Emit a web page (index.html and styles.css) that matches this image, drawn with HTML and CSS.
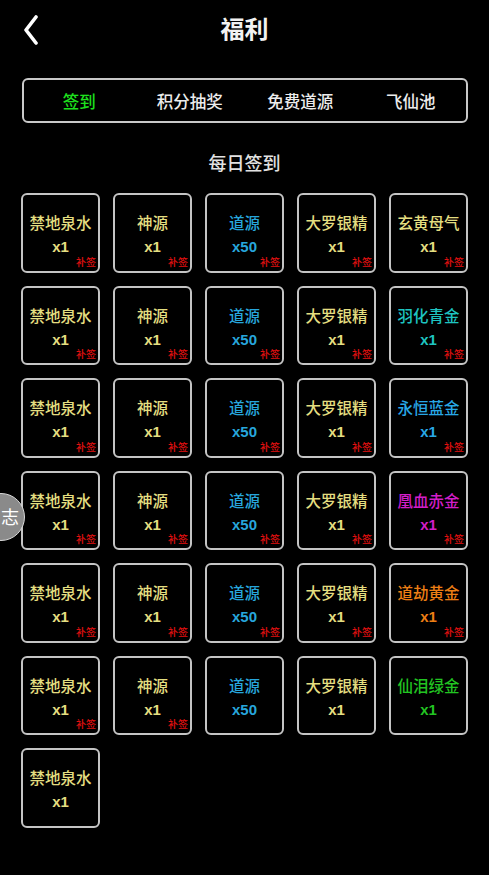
FILE: index.html
```html
<!DOCTYPE html>
<html lang="zh">
<head>
<meta charset="utf-8">
<title>福利</title>
<link rel="stylesheet" href="styles.css">
</head>
<body>
<div class="page">
  <header class="header">
    <div class="back">
      <svg width="22" height="32" viewBox="0 0 22 32"><polyline points="15,4 5,17 15,30" fill="none" stroke="#fff" stroke-width="3.6" stroke-linecap="round" stroke-linejoin="round"/></svg>
    </div>
    <h1 class="title">福利</h1>
    <div></div>
  </header>

  <nav class="tabs">
    <div class="tab active">签到</div>
    <div class="tab">积分抽奖</div>
    <div class="tab">免费道源</div>
    <div class="tab">飞仙池</div>
  </nav>

  <h2 class="subtitle">每日签到</h2>

  <div class="grid">
    <div class="card"><div class="name yellow">禁地泉水</div><div class="qty yellow">x1</div><span class="makeup">补签</span></div>
    <div class="card"><div class="name yellow">神源</div><div class="qty yellow">x1</div><span class="makeup">补签</span></div>
    <div class="card"><div class="name blue">道源</div><div class="qty blue">x50</div><span class="makeup">补签</span></div>
    <div class="card"><div class="name yellow">大罗银精</div><div class="qty yellow">x1</div><span class="makeup">补签</span></div>
    <div class="card"><div class="name yellow">玄黄母气</div><div class="qty yellow">x1</div><span class="makeup">补签</span></div>

    <div class="card"><div class="name yellow">禁地泉水</div><div class="qty yellow">x1</div><span class="makeup">补签</span></div>
    <div class="card"><div class="name yellow">神源</div><div class="qty yellow">x1</div><span class="makeup">补签</span></div>
    <div class="card"><div class="name blue">道源</div><div class="qty blue">x50</div><span class="makeup">补签</span></div>
    <div class="card"><div class="name yellow">大罗银精</div><div class="qty yellow">x1</div><span class="makeup">补签</span></div>
    <div class="card"><div class="name teal">羽化青金</div><div class="qty teal">x1</div><span class="makeup">补签</span></div>

    <div class="card"><div class="name yellow">禁地泉水</div><div class="qty yellow">x1</div><span class="makeup">补签</span></div>
    <div class="card"><div class="name yellow">神源</div><div class="qty yellow">x1</div><span class="makeup">补签</span></div>
    <div class="card"><div class="name blue">道源</div><div class="qty blue">x50</div><span class="makeup">补签</span></div>
    <div class="card"><div class="name yellow">大罗银精</div><div class="qty yellow">x1</div><span class="makeup">补签</span></div>
    <div class="card"><div class="name sky">永恒蓝金</div><div class="qty sky">x1</div><span class="makeup">补签</span></div>

    <div class="card"><div class="name yellow">禁地泉水</div><div class="qty yellow">x1</div><span class="makeup">补签</span></div>
    <div class="card"><div class="name yellow">神源</div><div class="qty yellow">x1</div><span class="makeup">补签</span></div>
    <div class="card"><div class="name blue">道源</div><div class="qty blue">x50</div><span class="makeup">补签</span></div>
    <div class="card"><div class="name yellow">大罗银精</div><div class="qty yellow">x1</div><span class="makeup">补签</span></div>
    <div class="card"><div class="name magenta">凰血赤金</div><div class="qty magenta">x1</div><span class="makeup">补签</span></div>

    <div class="card"><div class="name yellow">禁地泉水</div><div class="qty yellow">x1</div><span class="makeup">补签</span></div>
    <div class="card"><div class="name yellow">神源</div><div class="qty yellow">x1</div><span class="makeup">补签</span></div>
    <div class="card"><div class="name blue">道源</div><div class="qty blue">x50</div><span class="makeup">补签</span></div>
    <div class="card"><div class="name yellow">大罗银精</div><div class="qty yellow">x1</div><span class="makeup">补签</span></div>
    <div class="card"><div class="name orange">道劫黄金</div><div class="qty orange">x1</div><span class="makeup">补签</span></div>

    <div class="card"><div class="name yellow">禁地泉水</div><div class="qty yellow">x1</div><span class="makeup">补签</span></div>
    <div class="card"><div class="name yellow">神源</div><div class="qty yellow">x1</div><span class="makeup">补签</span></div>
    <div class="card"><div class="name blue">道源</div><div class="qty blue">x50</div></div>
    <div class="card"><div class="name yellow">大罗银精</div><div class="qty yellow">x1</div></div>
    <div class="card"><div class="name green">仙泪绿金</div><div class="qty green">x1</div></div>

    <div class="card"><div class="name yellow">禁地泉水</div><div class="qty yellow">x1</div></div>
  </div>

  <div class="float-btn">志</div>
</div>
</body>
</html>
```

FILE: styles.css
```css
html, body {
  margin: 0;
  padding: 0;
  background: #000;
}

body {
  font-family: "Noto Sans CJK SC", "Noto Sans", sans-serif;
  color: #fff;
}

.page {
  position: relative;
  width: 489px;
  min-height: 875px;
  overflow: hidden;
}

.header {
  display: grid;
  grid-template-columns: 1fr auto 1fr;
  align-items: center;
  height: 56px;
}

.back {
  padding-left: 21px;
  display: flex;
  align-items: center;
  padding-top: 2px;
}

.title {
  margin: 0;
  font-size: 24px;
  font-weight: 700;
  line-height: 56px;
  color: #f2f2f2;
}

.tabs {
  margin: 22px 21px 0 22px;
  height: 45px;
  box-sizing: border-box;
  border: 2px solid #c9c9c9;
  border-radius: 6px;
  display: grid;
  grid-template-columns: repeat(4, 1fr);
  align-items: center;
}

.tab {
  text-align: center;
  font-size: 16.5px;
  font-weight: 500;
  color: #ececec;
  line-height: 22px;
}

.tab.active {
  color: #1ee01e;
}

.subtitle {
  margin: 26px 0 0;
  text-align: center;
  font-size: 18px;
  font-weight: 500;
  line-height: 26px;
  color: #e2e2e2;
}

.grid {
  margin: 18px 0 0 21px;
  display: grid;
  grid-template-columns: repeat(5, 79px);
  grid-auto-rows: 79.5px;
  column-gap: 13px;
  row-gap: 13px;
}

.card {
  position: relative;
  box-sizing: border-box;
  border: 2px solid #c4c4c4;
  border-radius: 6px;
  display: flex;
  flex-direction: column;
  align-items: center;
  padding-top: 17px;
}

.name {
  font-size: 15.5px;
  font-weight: 500;
  line-height: 20px;
  white-space: nowrap;
}

.qty {
  margin-top: 5px;
  font-family: "Liberation Sans", "Noto Sans", sans-serif;
  font-size: 15px;
  font-weight: 700;
  line-height: 20px;
}

.makeup {
  position: absolute;
  right: 2px;
  bottom: 3px;
  font-size: 10px;
  line-height: 12px;
  color: #e01010;
  font-weight: 500;
}

.yellow { color: #e4de80; }
.blue { color: #27a6dc; }
.teal { color: #1ec4c0; }
.sky { color: #28a8e6; }
.magenta { color: #d21ec8; }
.orange { color: #ec7e14; }
.green { color: #22c422; }

.float-btn {
  position: absolute;
  left: -23px;
  top: 493px;
  width: 48px;
  height: 48px;
  box-sizing: border-box;
  border: 1.5px solid #d8d8d8;
  border-radius: 50%;
  background: #8a8a8a;
  color: #fff;
  font-size: 18px;
  line-height: 45px;
  text-align: right;
  padding-right: 5px;
}
```
